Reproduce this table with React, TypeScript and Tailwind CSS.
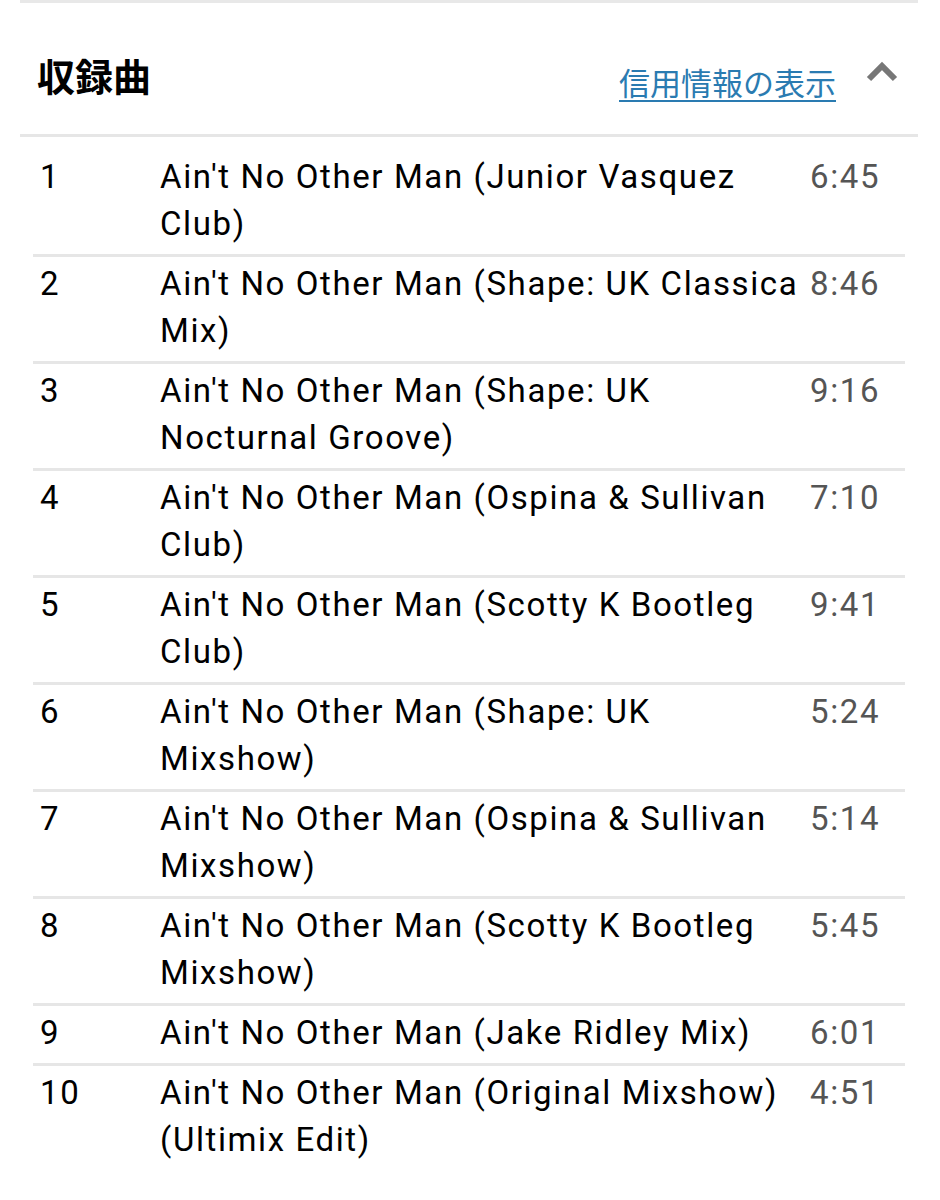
const tracks = [
  { no: 1, title: "Ain't No Other Man (Junior Vasquez Club)", time: "6:45" },
  { no: 2, title: "Ain't No Other Man (Shape: UK Classical Mix)", time: "8:46" },
  { no: 3, title: "Ain't No Other Man (Shape: UK Nocturnal Groove)", time: "9:16" },
  { no: 4, title: "Ain't No Other Man (Ospina & Sullivan Club)", time: "7:10" },
  { no: 5, title: "Ain't No Other Man (Scotty K Bootleg Club)", time: "9:41" },
  { no: 6, title: "Ain't No Other Man (Shape: UK Mixshow)", time: "5:24" },
  { no: 7, title: "Ain't No Other Man (Ospina & Sullivan Mixshow)", time: "5:14" },
  { no: 8, title: "Ain't No Other Man (Scotty K Bootleg Mixshow)", time: "5:45" },
  { no: 9, title: "Ain't No Other Man (Jake Ridley Mix)", time: "6:01" },
  { no: 10, title: "Ain't No Other Man (Original Mixshow) (Ultimix Edit)", time: "4:51" },
]

export default function App() {
  return (
    <div className="w-[940px] min-h-[1200px] bg-white">
      <div className="ml-[20px] mr-[22px] border-t-[3px] border-[#e8e8e8]">
        {/* Header */}
        <div className="h-[134px] flex items-center justify-between border-b-[3px] border-[#e6e6e6] pl-[17px] pr-[20px] pt-[18px]">
          <h2 className="text-[38px] font-bold text-black leading-none pb-[6px] font-['Noto_Sans_CJK_JP',sans-serif]">
            収録曲
          </h2>
          <div className="flex items-center gap-[30px]">
            <a className="text-[31px] leading-none text-[#2a7bb1] underline underline-offset-[5px] decoration-[2px] pt-[8px] font-['Noto_Sans_CJK_JP',sans-serif]">
              信用情報の表示
            </a>
            <svg width="32" height="22" viewBox="0 0 32 22" className="mb-[14px]">
              <path d="M3 19 L16 6 L29 19" fill="none" stroke="#777777" strokeWidth="6" strokeLinejoin="miter" />
            </svg>
          </div>
        </div>

        {/* Track list */}
        <div className="mx-[13px] pt-[13px] font-['Roboto',sans-serif] text-[33px] tracking-[1.6px] leading-[47px]">
          {tracks.map((t, i) => (
            <div
              key={t.no}
              className={`flex pt-[3px] pb-[7px] ${i < tracks.length - 1 ? "border-b-[3px] border-[#e6e6e6]" : ""}`}
            >
              <div className="w-[127px] shrink-0 pl-[7px] text-black">{t.no}</div>
              <div className="w-[637px] shrink-0 overflow-hidden text-black">
                <div className="w-[650px]">{t.title}</div>
              </div>
              <div className="flex-1 pl-[13px] text-[#555555]">{t.time}</div>
            </div>
          ))}
        </div>
      </div>
    </div>
  )
}
